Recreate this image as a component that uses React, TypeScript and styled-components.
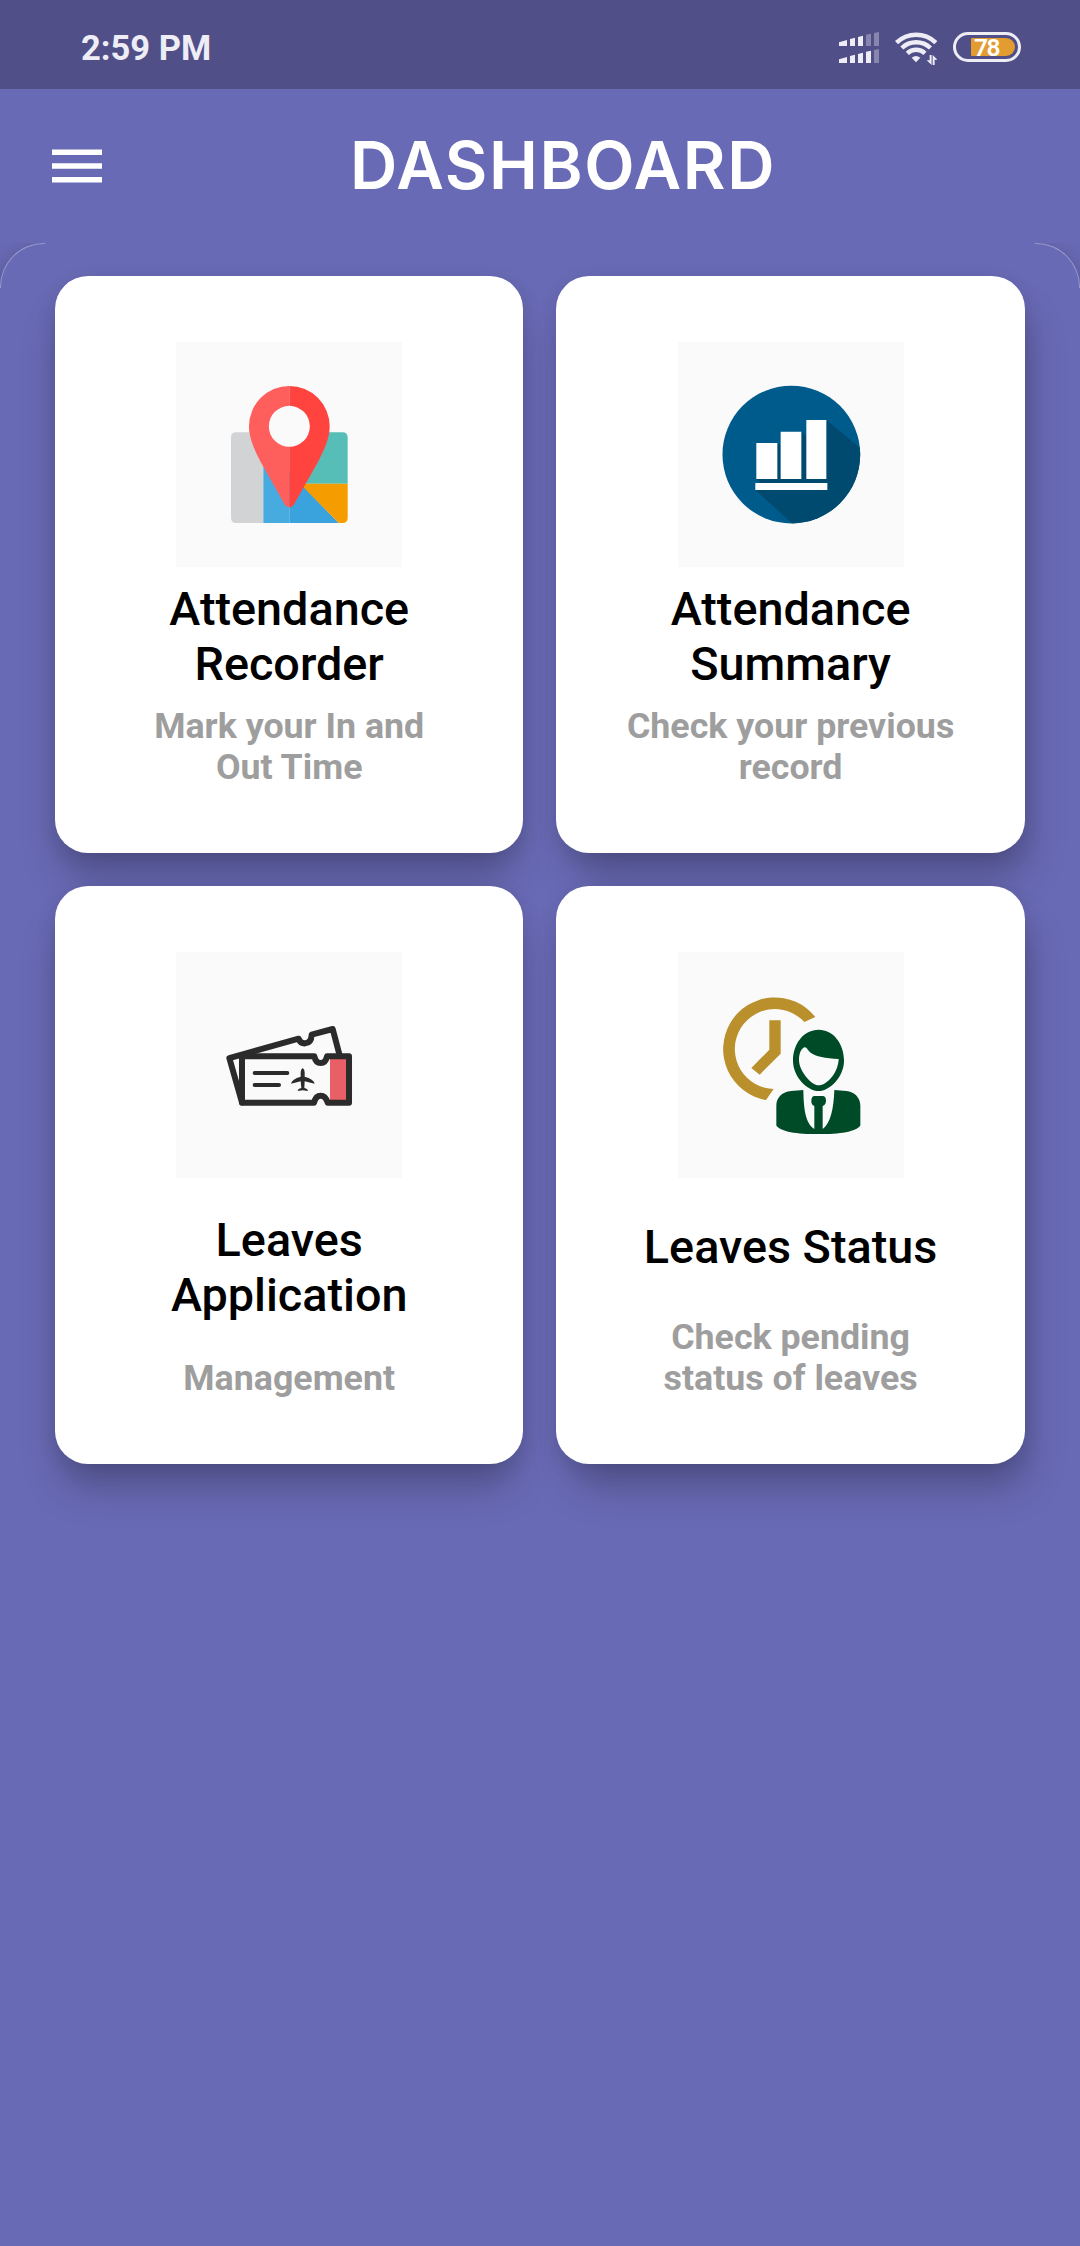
import React from "react";
import styled, { createGlobalStyle } from "styled-components";

const BG = "#696ab5";
const LIGHT = "#eeedf6";

const GlobalStyle = createGlobalStyle`
  * { box-sizing: border-box; }
  html, body { margin: 0; padding: 0; background: ${BG}; }
  body { font-family: Roboto, "Liberation Sans", sans-serif; }
`;

const Screen = styled.div`
  width: 1080px;
  height: 2246px;
  display: flex;
  flex-direction: column;
  overflow: hidden;
  background: ${BG};
`;

const StatusBar = styled.div`
  height: 89px;
  flex: none;
  display: flex;
  align-items: center;
  justify-content: space-between;
  padding: 8px 59px 0 81px;
  background: #504f88;
  color: ${LIGHT};
`;

const Clock = styled.span`
  font-size: 34.5px;
  line-height: 40px;
  font-weight: 700;
  padding-bottom: 1px;
`;

const StatusIcons = styled.div`
  display: flex;
  align-items: flex-start;
  gap: 16px;
`;

const StatusGlyph = styled.svg`
  display: block;
  flex: none;
`;

const Battery = styled.div`
  width: 68px;
  height: 30px;
  display: flex;
  justify-content: flex-end;
  padding: 3px;
  border: 3px solid ${LIGHT};
  border-radius: 15px;
`;

const BatteryLevel = styled.div`
  width: 44px;
  height: 18px;
  padding-left: 3px;
  border-radius: 1px 9px 9px 1px;
  background: #e39c2f;
  color: #fff;
  font-size: 24.5px;
  line-height: 20px;
  font-weight: 600;
  letter-spacing: -1.4px;
`;

const Header = styled.header`
  height: 154px;
  flex: none;
  display: flex;
  align-items: center;
  padding: 0 56px 0 52px;
`;

const MenuButton = styled.button`
  width: 50px;
  height: 34px;
  padding: 0;
  border: 0;
  background: none;
  color: #fff;
`;

const Title = styled.h1`
  flex: 1;
  margin: 0;
  text-align: center;
  color: #fff;
  font-family: Inter, Roboto, sans-serif;
  font-size: 65.5px;
  line-height: 80px;
  font-weight: 560;
  letter-spacing: 1.6px;
`;

const PanelClip = styled.div`
  flex: 1;
  display: flex;
  overflow: hidden;
`;

const Panel = styled.main`
  position: relative;
  flex: 1;
  padding: 33px 55px;
  border-radius: 44px 44px 0 0;
  background: ${BG};
  box-shadow: 0 8px 24px rgba(0, 0, 0, 0.28);

  &::before,
  &::after {
    content: "";
    position: absolute;
    top: 0;
    width: 44px;
    height: 44px;
    border: 0 solid rgba(255, 255, 255, 0.3);
    border-top-width: 1px;
  }
  &::before {
    left: 0;
    border-left-width: 1px;
    border-top-left-radius: 44px;
  }
  &::after {
    right: 0;
    border-right-width: 1px;
    border-top-right-radius: 44px;
  }
`;

const CardGrid = styled.div`
  display: grid;
  grid-template-columns: 468.4px 468.4px;
  grid-auto-rows: 577.4px;
  gap: 33px;
`;

const Card = styled.section<{ $shift: number }>`
  display: flex;
  flex-direction: column;
  align-items: center;
  justify-content: space-between;
  padding: 65.9px 70px 65.2px;
  border-radius: 33px;
  background: #fff;
  text-align: center;
  box-shadow:
    ${({ $shift }) => $shift}px 30px 40px -7px rgba(0, 0, 0, 0.24),
    0 5px 20px rgba(0, 0, 0, 0.1);
`;

const IconTile = styled.div`
  width: 226px;
  height: 225.4px;
  flex: none;
  margin-bottom: 1px;
  background: #fafafa;

  svg { display: block; width: 100%; height: 100%; }
`;

const CardTitle = styled.h2`
  margin: 0;
  font-size: 46.75px;
  line-height: 55px;
  font-weight: 500;
  color: #000;
`;

const CardNote = styled.p`
  margin: 0;
  font-size: 35.75px;
  line-height: 41px;
  font-weight: 700;
  color: #9e9e9e;
`;

const SignalIcon = () => (
  <StatusGlyph width="40" height="31" viewBox="57 36 120 93" fill={LIGHT}>
    <path d="M57 67 81 60V78H57ZM90 57 105 53V78H90ZM114 51 129 47V78H114Z" />
    <path opacity=".35" d="M138 44 153 41V78H138ZM162 39 177 36V78H162Z" />
    <path d="M57 118 81 111V129H57ZM90 108 105 104V129H90ZM114 102 129 98V129H114ZM138 95 153 92V129H138Z" />
    <path opacity=".35" d="M162 90 177 87V129H162Z" />
  </StatusGlyph>
);

const WifiIcon = () => (
  <StatusGlyph width="42.3" height="33" viewBox="225 36 127 99" fill={LIGHT}>
    <g fill="none" stroke={LIGHT} strokeWidth="13">
      <path d="M229.500 68A85 85 0 0 1 347.500 68" />
      <path d="M245.500 84A62 62 0 0 1 331.500 84" />
      <path d="M262 100A38 38 0 0 1 315 100" />
    </g>
    <path d="M275 113Q288 103 301 113L288 127Z" />
    <path d="M329 105H335V135L320 121H329ZM338 135V105L352 119H344V135Z" />
  </StatusGlyph>
);

const MenuIcon = () => (
  <StatusGlyph width="50" height="34" viewBox="0 0 50 34" fill="#fff">
    <path d="M0 .5H50V6H0ZM0 14.3H50V19.8H0ZM0 28H50V33.5H0Z" />
  </StatusGlyph>
);

const MapPinIcon = () => (
  <svg viewBox="19 21 676 676">
    <path fill="#d1d3d5" d="M280 292H199Q183 292 183 308V548Q183 564 199 564H280Z" />
    <path fill="#48abe0" d="M280 292H358V564H280Z" />
    <path fill="#3aa2dc" d="M358 410 506 564H358Z" />
    <path fill="#57bdb7" d="M380 292H517Q533 292 533 308V446H380Z" />
    <path fill="#f59c00" d="M390 446H533V548Q533 564 517 564H506Z" />
    <path fill="#ff5f5c" d="M358 153A121 121 0 0 0 237 274C237 312 256 349 271 379L342 505Q348 517 358 517Z" />
    <path fill="#ff443f" d="M358 153A121 121 0 0 1 479 274C479 312 460 349 445 379L374 505Q368 517 358 517Z" />
    <circle cx="358" cy="274" r="61.5" fill="#fafafa" />
  </svg>
);

const ChartIcon = () => (
  <svg viewBox="24 21 676 676">
    <clipPath id="chartDisc">
      <circle cx="363" cy="358.500" r="206.500" />
    </clipPath>
    <circle cx="363" cy="358.500" r="206.500" fill="#005b8d" />
    <path
      clipPath="url(#chartDisc)"
      fill="#004a70"
      d="M258 432H321V324L331 333V420H393V290L408 304V420H468V255L580 347V580H382L255 465H471V444H272Z"
    />
    <path fill="#fff" d="M258 324H321V432H258ZM331 290H393V432H331ZM408 255H468V432H408ZM255 444H471V465H255Z" />
  </svg>
);

const TicketIcon = () => (
  <svg viewBox="19 21 676 676">
    <path fill="#e85f65" d="M480 338H532V468H480Z" />
    <g fill="none" stroke="#2b2b2b" strokeLinecap="round" strokeLinejoin="round">
      <g strokeWidth="18">
        <path d="M216 472 178 339 386 281Q391 296 406 295Q424 294 425 269L488 252 508 328" />
        <path d="M216 334H433Q437 354 452 354Q467 354 471 334H537V473H473Q467 452 452 452Q437 452 432 473H216Z" />
      </g>
      <path strokeWidth="12" d="M254 384H352M254 420H327" />
    </g>
    <path
      fill="#2b2b2b"
      d="M398 369Q404 373 404 382V395Q431 402 434 416L404 409L403 429Q413 431 414 438L398 436L383 438Q384 431 394 429L392 409L363 416Q366 402 392 395V382Q392 373 398 369Z"
    />
  </svg>
);

const StaffClockIcon = () => (
  <svg viewBox="24 21 676 676">
    <path fill="#ba902c" d="M435 216A155 155 0 1 0 287 465L310 432A120 120 0 1 1 402 231Z" />
    <path fill="#ba902c" d="M297 226H331V326L268 389 243 369 297 314Z" />
    <path
      fill="#004b27"
      fillRule="evenodd"
      d="M445 254C489 254 521 296 521 347C521 395 478 438 445 438C411 438 368 395 368 347C368 296 400 254 445 254ZM402 307C392 311 386 326 386 345C386 378 423 421 445 421C469 421 503 385 505 342C465 340 436 334 421 323C411 315 409 305 402 307Z"
    />
    <path fill="#004b27" d="M399 435C400 490 405 535 432 552V483Q422 479 423 467Q423 453 433 453H457Q467 453 467 467Q467 479 457 483V552C481 535 490 490 492 435L528 438C552 440 570 458 570 482V541C556 560 510 567 444 567C378 567 332 560 318 541V482C318 458 336 440 362 438Z" />
  </svg>
);

const cards = [
  { title: "Attendance Recorder", note: "Mark your In and Out Time", Icon: MapPinIcon },
  { title: "Attendance Summary", note: "Check your previous record", Icon: ChartIcon },
  { title: "Leaves Application", note: "Management", Icon: TicketIcon },
  { title: "Leaves Status", note: "Check pending status of leaves", Icon: StaffClockIcon },
];

export default function App() {
  return (
    <Screen>
      <GlobalStyle />
      <StatusBar>
        <Clock>2:59 PM</Clock>
        <StatusIcons>
          <SignalIcon />
          <WifiIcon />
          <Battery>
            <BatteryLevel>78</BatteryLevel>
          </Battery>
        </StatusIcons>
      </StatusBar>
      <Header>
        <MenuButton aria-label="Menu">
          <MenuIcon />
        </MenuButton>
        <Title>DASHBOARD</Title>
      </Header>
      <PanelClip>
        <Panel>
          <CardGrid>
            {cards.map(({ title, note, Icon }, i) => (
              <Card key={title} $shift={i % 2 ? 9 : -1}>
                <IconTile>
                  <Icon />
                </IconTile>
                <CardTitle>{title}</CardTitle>
                <CardNote>{note}</CardNote>
              </Card>
            ))}
          </CardGrid>
        </Panel>
      </PanelClip>
    </Screen>
  );
}
